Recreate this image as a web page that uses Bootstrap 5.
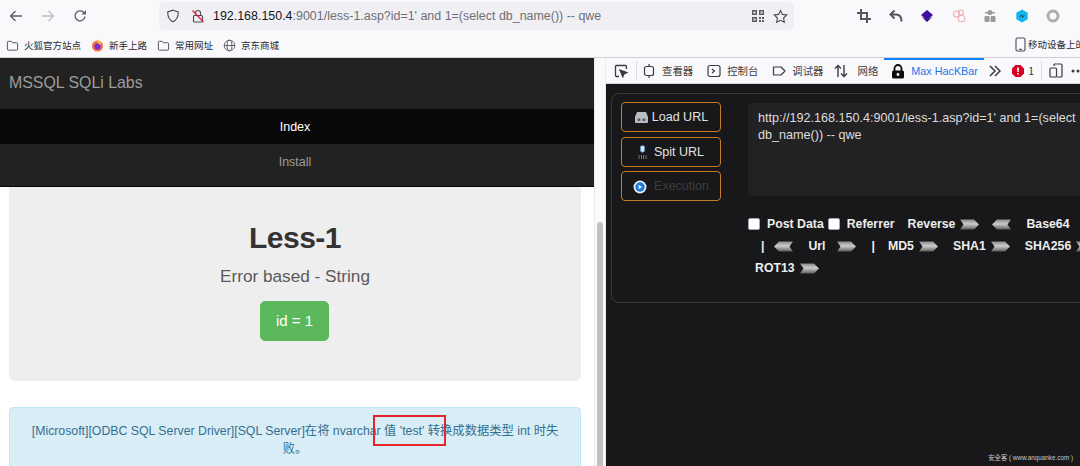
<!DOCTYPE html>
<html lang="zh-CN">
<head>
<meta charset="utf-8">
<title>Max HacKBar</title>
<link href="https://cdn.jsdelivr.net/npm/bootstrap@5.3.0/dist/css/bootstrap.min.css" rel="stylesheet">
<style>
html,body{height:466px;overflow:hidden}
body{background:#fff;font-family:"Liberation Sans","Noto Sans CJK SC",sans-serif;color:#333}
.cjk{font-family:"Noto Sans CJK SC",sans-serif}
.ff-chrome{background:#f9f9fb;height:58px;border-bottom:1px solid #cfcfd3}
.ff-tool{height:32px}
.ff-nav{width:32px}
.ff-addr{width:635px;height:28px;margin-left:63px;background:#f0f0f4;border-radius:5px;padding:0 6px 0 7px;font-size:12.45px;color:#6f6e75;white-space:nowrap}
.ff-host{color:#15141a}
.ff-url{margin-left:8px;flex:1 1 auto;overflow:hidden}
.ff-ext{margin-left:54.25px}
.ff-ext svg{width:14px;height:14px;margin:0 8.75px;flex:none}
.ff-marks{height:25px;font-size:9.5px;color:#2b2a33;padding:2px 0 0 6px;white-space:nowrap}
.ff-mark{display:flex;align-items:center;gap:5px;margin-right:10px}
.ff-mobile{position:absolute;left:1015px;top:37px;display:flex;gap:2px;align-items:center;font-size:9.5px;color:#2b2a33;white-space:nowrap}
.work{height:408px}
.pane-page{width:594px;flex:none;height:408px;overflow:hidden;background:#fff}
.lab-nav{background:#222;padding:0 0 7px;display:block;border-bottom:1px solid #080808;border-radius:0}
.lab-brand{display:block;height:51px;line-height:49px;padding:0 9px;margin:0;font-size:15.9px;color:#9d9d9d}
.lab-link{display:block;height:35px;line-height:37px;padding:0 4px 0 0;text-align:center;font-size:12.5px;color:#9d9d9d}
.lab-link.active{background:#080808;color:#fff}
.lab-jumbo{margin:0 13px 26px 9px;height:194px;background:#eee;border-radius:0 0 6px 6px;text-align:center;padding-top:32px}
.lab-title{font-size:30px;font-weight:700;line-height:38px;margin:0;color:#333;letter-spacing:-.5px}
.lab-sub{font-size:17.2px;line-height:22px;margin:8px 0 14px;color:#5a5a5a;font-weight:400}
.lab-btn{width:69px;height:40px;padding:0;margin-right:1px;line-height:38px;font-size:15px;background:#5cb85c;border-color:#5cb85c;border-radius:5px;color:#fff}
.lab-alert{margin:0 13px 0 9px;height:80px;padding:14px 18px;background:#d9edf7;border:1px solid #bce8f1;border-radius:4px;color:#31708f;font-size:12.3px;line-height:18px;text-align:center;position:relative}
.lab-mark{position:absolute;left:363px;top:7px;width:73px;height:31px;border:2px solid #e8242a}
.pane-bar{width:12px;flex:none;background:#fafafa;border-left:1px solid #ececec;border-right:1px solid #ececec;padding:164px 2px 0 2px}
.pane-thumb{height:260px;background:#c1c1c1;border-radius:4px}
.pane-dev{flex:1 1 auto;min-width:0;background:#18181a;position:relative;overflow:hidden}
.dt-tabs{height:26px;background:#f9f9fb;color:#3b3b40;font-size:10.4px;border-bottom:1px solid #d8d8dc;white-space:nowrap}
.dt-tabs svg{flex:none}
.dt-pick{margin-left:8px;width:14px;height:14px}
.dt-sep{width:1px;height:20px;background:#dcdce0;flex:none}
.dt-tab{display:flex;align-items:center;gap:6px;padding:0 7px;height:26px}
.dt-first{margin-left:-2px}
.dt-net{padding-left:0;margin-left:3px;gap:10px;margin-right:-1px}
.dt-tab.active{color:#1a73e8;border-top:2px solid #0a84ff;width:100px;font-size:10.8px;flex:none}
.dt-latin{font-family:"Liberation Sans",sans-serif}
.hb-wrap{margin:9px 0 0 5px;width:520px;height:210px;border:1px solid #38383a;border-radius:8px;display:flex;padding:8px 0 0 9px}
.hb-btns{width:100px;flex:none;display:flex;flex-direction:column;gap:4.5px}
.hb-btn{height:30px;padding:1px 0 0;border:1px solid #c67a2a;border-radius:4px;background:transparent;color:#e2e2e2;font-size:12.5px;display:flex;align-items:center;justify-content:center;gap:3px}
.hb-btn:disabled,.hb-off{color:#3c3c3e;opacity:1;border-color:#c67a2a}
.hb-main{margin-left:27px;flex:1 1 auto;min-width:0}
.hb-url{display:block;width:400px;height:93px;border:0;border-radius:4px;background:#222224;color:#dedede;padding:7px 10px;font-size:12.6px;line-height:17px;resize:none;overflow:hidden;margin:1px 0 17px}
.hb-url:focus{background:#222224;color:#dedede;box-shadow:none}
.hb-row{height:22px;display:flex;align-items:center;font-size:12.3px;font-weight:700;color:#eee;white-space:nowrap}
.hb-check{width:12px;height:12px;flex:none;background:#fff;border:1.5px solid #a6a6b6;border-radius:2px;margin:0;appearance:none}
.hb-row svg{width:19px;height:11px;flex:none}
.g4{margin-left:4px}.g5{margin-left:5px}.g7{margin-left:7px}.g10{margin-left:10px}.g13{margin-left:13px}.g15{margin-left:15px}.g11{margin-left:11px}.g16{margin-left:16px}
.hb-mark{position:absolute;right:7px;bottom:4px;font-family:"Liberation Sans","Noto Sans CJK SC",sans-serif;font-size:6.3px;color:#c9c9c9;white-space:nowrap}
</style>
</head>
<body>
<svg width="0" height="0" class="d-block" aria-hidden="true"><defs>
<linearGradient id="chev" x1="0" y1="0" x2="0" y2="1"><stop offset="0" stop-color="#8a8a8a"/><stop offset=".45" stop-color="#cccccc"/><stop offset="1" stop-color="#5c5c5c"/></linearGradient>
<symbol id="ar" viewBox="0 0 19 11"><path d="M0 .5h14l5 5-5 5H0l3.500-5z" fill="url(#chev)"/></symbol>
<symbol id="al" viewBox="0 0 19 11"><path d="M19 .5H5l-5 5 5 5h14l-3.500-5z" fill="url(#chev)"/></symbol>
<symbol id="folder" viewBox="0 0 14 14"><path d="M1.500 3.500a1 1 0 0 1 1-1h3l1.500 1.500h4.500a1 1 0 0 1 1 1v6a1 1 0 0 1-1 1h-9a1 1 0 0 1-1-1z" fill="none" stroke="#4a4a50" stroke-width="1"/></symbol>
</defs></svg>

<div class="ff-chrome position-relative">
  <div class="ff-tool d-flex align-items-center">
    <div class="ff-nav d-flex justify-content-center"><svg width="14" height="14" viewBox="0 0 14 14" fill="none" stroke="#5b5b66" stroke-width="1.300"><path d="M13 7H1.500M6.500 2 1.500 7l5 5"/></svg></div>
    <div class="ff-nav d-flex justify-content-center"><svg width="14" height="14" viewBox="0 0 14 14" fill="none" stroke="#bdbdc4" stroke-width="1.300"><path d="M1 7h11.500M7.500 2l5 5-5 5"/></svg></div>
    <div class="ff-nav d-flex justify-content-center"><svg width="14" height="14" viewBox="0 0 14 14" fill="none" stroke="#5b5b66" stroke-width="1.300"><path d="M12 7.500A5 5 0 1 1 10.300 3L12 4.500M12.300 1.500v3.300H9"/></svg></div>
    <div class="ff-addr d-flex align-items-center">
      <svg width="14" height="14" viewBox="0 0 14 14" fill="none" stroke="#4a4a50" stroke-width="1.100"><path d="M7 1.200 12.300 3c0 5-1.500 8-5.300 9.800C3.200 11 1.700 8 1.700 3z"/></svg>
      <svg class="g11" width="14" height="14" viewBox="0 0 14 14" fill="none" stroke="#4a4a50" stroke-width="1.100"><rect x="2.500" y="6.500" width="9" height="6.500" rx="1"/><path d="M4.500 6.500V4a2.500 2.500 0 0 1 5 0v2.500"/><path d="M1.500 1.500l11 11.500" stroke="#e22850" stroke-width="1.400"/></svg>
      <div class="ff-url"><span class="ff-host">192.168.150.4</span>:9001/less-1.asp?id=1' and 1=(select db_name()) -- qwe</div>
      <svg width="14" height="14" viewBox="0 0 14 14" fill="#5b5b66"><path d="M1 1h5v5H1zm1.500 1.500v2h2v-2zM8 1h5v5H8zm1.500 1.500v2h2v-2zM1 8h5v5H1zm1.500 1.500v2h2v-2zM8 8h2v2H8zm3 0h2v2h-2zm-3 3h2v2H8zm3 0h2v2h-2z"/></svg>
      <svg class="ms-2" width="15" height="15" viewBox="0 0 15 15" fill="none" stroke="#4a4a50" stroke-width="1.100"><path d="m7.500 1.500 1.900 3.900 4.300.6-3.100 3 .7 4.300-3.800-2-3.800 2 .7-4.300-3.100-3 4.300-.6z"/></svg>
    </div>
    <div class="ff-ext d-flex align-items-center">
      <svg viewBox="0 0 14 14" fill="none" stroke="#55555c" stroke-width="2"><path d="M4 0v10h10M0 4h10v10"/></svg>
      <svg viewBox="0 0 14 14" fill="none" stroke="#55555c" stroke-width="2"><path d="M5.500 1.500 1.500 5.500l4 4"/><path d="M2 5.500h5c4 0 5.500 2.500 5.500 7"/></svg>
      <svg viewBox="0 0 14 14"><path d="M7 1l6 5-6 5-6-5z" fill="#3d0d9e"/><path d="M1.500 7.500 7 13l5.500-5.500L7 10.500z" fill="#2a0a78"/></svg>
      <svg viewBox="0 0 14 14" fill="none" stroke="#eeb0b0" stroke-width="1.100"><circle cx="4.500" cy="5" r="3"/><circle cx="9" cy="3.500" r="2.500"/><circle cx="9.500" cy="9.500" r="3.300"/></svg>
      <svg viewBox="0 0 14 14" fill="#9a9a9a"><circle cx="7" cy="3.500" r="2.500"/><rect x="2" y="3" width="10" height="1.500"/><rect x="1.500" y="7" width="5" height="6" rx="1"/><rect x="7.500" y="7" width="5" height="6" rx="1"/></svg>
      <svg viewBox="0 0 14 14"><path d="M7 .5 12.700 3.700v6.600L7 13.500 1.300 10.300V3.700z" fill="#12b5ee"/><path d="M4 8l3-3v2l3-1-3 3V7z" fill="#26343f"/></svg>
      <svg viewBox="0 0 14 14" fill="none" stroke="#acacac" stroke-width="3"><circle cx="7" cy="7" r="5"/></svg>
    </div>
  </div>
  <div class="ff-marks d-flex align-items-center cjk">
    <div class="ff-mark"><svg width="13" height="13"><use href="#folder"/></svg>火狐官方站点</div>
    <div class="ff-mark"><svg width="13" height="13" viewBox="0 0 14 14"><circle cx="7" cy="7.500" r="6" fill="#ff7139"/><circle cx="7" cy="8" r="3.500" fill="#7b2fd0"/><path d="M7 .8c3 1.400 4 3.500 3.500 6L7 4z" fill="#ffbd4f"/></svg>新手上路</div>
    <div class="ff-mark"><svg width="13" height="13"><use href="#folder"/></svg>常用网址</div>
    <div class="ff-mark"><svg width="13" height="13" viewBox="0 0 14 14" fill="none" stroke="#4a4a50" stroke-width=".9"><circle cx="7" cy="7" r="5.700"/><ellipse cx="7" cy="7" rx="2.600" ry="5.700"/><path d="M1.300 7h11.400"/></svg>京东商城</div>
  </div>
  <div class="ff-mobile cjk"><svg width="11" height="15" viewBox="0 0 11 15" fill="none" stroke="#4a4a50" stroke-width="1.100"><rect x="1" y="1" width="9" height="13" rx="1.500"/><path d="M4 12.300h3"/></svg>移动设备上的书签</div>
</div>

<div class="work d-flex">
  <div class="pane-page">
    <nav class="navbar lab-nav">
      <a class="navbar-brand lab-brand" href="#">MSSQL SQLi Labs</a>
      <a class="nav-link lab-link active" href="#">Index</a>
      <a class="nav-link lab-link" href="#">Install</a>
    </nav>
    <div class="lab-jumbo">
      <h1 class="lab-title">Less-1</h1>
      <p class="lab-sub">Error based - String</p>
      <a class="btn lab-btn" href="#">id = 1</a>
    </div>
    <div class="alert lab-alert" role="alert">[Microsoft][ODBC SQL Server Driver][SQL Server]在将 nvarchar 值 'test' 转换成数据类型 int 时失败。<span class="lab-mark"></span></div>
  </div>
  <div class="pane-bar"><div class="pane-thumb"></div></div>
  <div class="pane-dev">
    <div class="dt-tabs d-flex align-items-center cjk">
      <svg class="dt-pick" viewBox="0 0 14 14" fill="none" stroke="#3b3b40" stroke-width="1.300"><path d="M5 12.500H2.500a1 1 0 0 1-1-1v-9a1 1 0 0 1 1-1h9a1 1 0 0 1 1 1V5"/><path d="M6 6l7 2.500-3 1.300-1.200 3z" fill="#3b3b40"/></svg>
      <span class="dt-sep ms-2"></span>
      <div class="dt-tab dt-first"><svg width="14" height="14" viewBox="0 0 14 14" fill="none" stroke="#3b3b40" stroke-width="1.200"><rect x="2.500" y="2.500" width="9" height="9" rx="2"/><path d="M7 0v2.500M7 11.500V14"/></svg>查看器</div>
      <div class="dt-tab"><svg width="14" height="14" viewBox="0 0 14 14" fill="none" stroke="#3b3b40" stroke-width="1.200"><rect x="1" y="1.500" width="12" height="11" rx="2"/><path d="m5 5 2.500 2L5 9"/></svg>控制台</div>
      <div class="dt-tab"><svg width="14" height="14" viewBox="0 0 14 14" fill="none" stroke="#3b3b40" stroke-width="1.200"><path d="M1.500 3h7.500l4 4-4 4H1.500z" stroke-linejoin="round"/></svg>调试器</div>
      <div class="dt-tab dt-net"><svg width="14" height="14" viewBox="0 0 14 14" fill="none" stroke="#3b3b40" stroke-width="1.400"><path d="M4 13V1.500M1 4.500l3-3 3 3M10 1v11.500M7 9.500l3 3 3-3"/></svg>网络</div>
      <div class="dt-tab active"><svg width="14" height="15" viewBox="0 0 14 15"><path d="M3.500 7V4.500a3.500 3.500 0 0 1 7 0V7" fill="none" stroke="#0c0c0d" stroke-width="1.800"/><rect x="1" y="6.500" width="12" height="8" rx="1.500" fill="#0c0c0d"/><circle cx="7" cy="10.500" r="1.400" fill="#fff"/></svg><span class="dt-latin">Max HacKBar</span></div>
      <svg class="g5" width="12" height="12" viewBox="0 0 12 12" fill="none" stroke="#3b3b40" stroke-width="1.500"><path d="m1 1 5 5-5 5M6 1l5 5-5 5"/></svg>
      <svg class="g11" width="12" height="12" viewBox="0 0 12 12"><path d="M3.500 0h5L12 3.500v5L8.500 12h-5L0 8.500v-5z" fill="#d70022"/><path d="M5.200 2.500h1.600V7H5.200zM5.200 8h1.600v1.600H5.200z" fill="#fff"/></svg>
      <span class="g4">1</span>
      <span class="dt-sep g7"></span>
      <svg class="g7" width="14" height="15" viewBox="0 0 14 15" fill="none" stroke="#3b3b40" stroke-width="1.200"><rect x="1" y="5" width="6.500" height="9" rx="1"/><path d="M5 3V2a1 1 0 0 1 1-1h6a1 1 0 0 1 1 1v11a1 1 0 0 1-1 1H8"/></svg>
      <svg class="ms-2" width="12" height="4" viewBox="0 0 12 4" fill="#3b3b40"><circle cx="2" cy="2" r="1.500"/><circle cx="7" cy="2" r="1.500"/></svg>
    </div>
    <div class="hb-wrap">
      <div class="hb-btns">
        <button type="button" class="btn hb-btn"><svg width="15" height="13" viewBox="0 0 15 13"><path d="M3 1h9l2 5v5a1 1 0 0 1-1 1H2a1 1 0 0 1-1-1V6z" fill="#b9bdc2"/><rect x="3.500" y="7.500" width="3" height="2.500" rx="1" fill="#55585c"/><rect x="8.500" y="7.500" width="3" height="2.500" rx="1" fill="#55585c"/></svg>Load URL</button>
        <button type="button" class="btn hb-btn"><svg class="me-1" width="9" height="15" viewBox="0 0 9 15"><path d="M2.500 1.500C2.500.5 6.500.5 6.500 1.500V6C6.500 7.500 2.500 7.500 2.500 6z" fill="#d7e6f5" stroke="#5b8fc0" stroke-width=".8"/><path d="M1 10v4M3.500 10v4M5.500 10v4M8 10v4" stroke="#777" stroke-width="1"/></svg>Spit URL</button>
        <button type="button" class="btn hb-btn hb-off" disabled><svg class="me-1" width="14" height="14" viewBox="0 0 14 14"><circle cx="7" cy="7" r="6.500" fill="#e4edf6"/><circle cx="7" cy="7" r="4.700" fill="#1f79d8"/><path d="M5.700 4.700 9 7 5.700 9.300z" fill="#fff"/></svg>Execution</button>
      </div>
      <div class="hb-main">
        <textarea class="form-control hb-url" rows="3" aria-label="URL">http://192.168.150.4:9001/less-1.asp?id=1' and 1=(select db_name()) -- qwe</textarea>
        <div class="hb-row"><input class="hb-check" type="checkbox" aria-label="Post Data"><span class="g7">Post Data</span><input class="hb-check g4" type="checkbox" aria-label="Referrer"><span class="g7">Referrer</span><span class="g13">Reverse</span><svg class="g5"><use href="#ar"/></svg><svg class="g13"><use href="#al"/></svg><span class="g15">Base64</span></div>
        <div class="hb-row"><span class="g13">|</span><svg class="g10"><use href="#al"/></svg><span class="g15">Url</span><svg class="g11"><use href="#ar"/></svg><span class="g16">|</span><span class="g13">MD5</span><svg class="g5"><use href="#ar"/></svg><span class="g15">SHA1</span><svg class="g5"><use href="#ar"/></svg><span class="g15">SHA256</span><svg class="g5"><use href="#ar"/></svg></div>
        <div class="hb-row"><span class="g7">ROT13</span><svg class="g5"><use href="#ar"/></svg></div>
      </div>
    </div>
    <div class="hb-mark">安全客 ( www.anquanke.com )</div>
  </div>
</div>
</body>
</html>
